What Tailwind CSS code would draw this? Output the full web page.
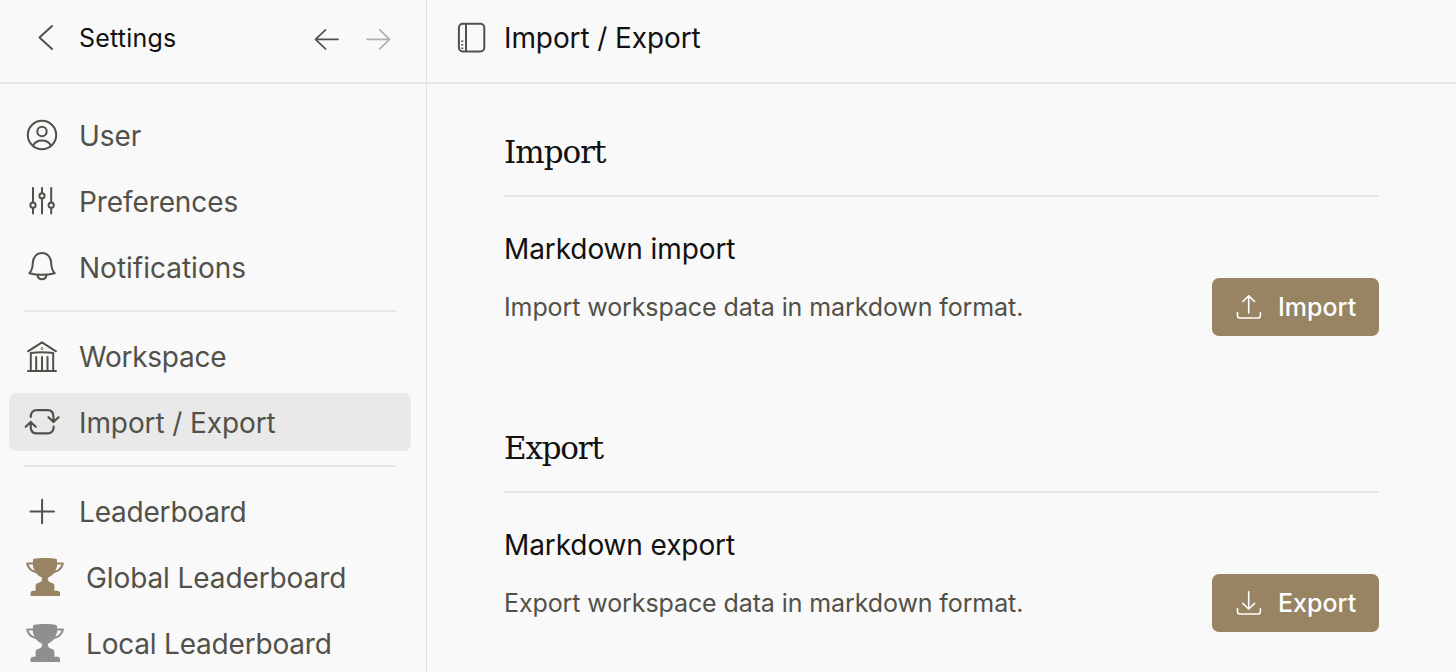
<!DOCTYPE html>
<html lang="en">
<head>
<meta charset="utf-8" />
<title>Settings – Import / Export</title>
<script src="https://cdn.jsdelivr.net/npm/@tailwindcss/browser@4"></script>
</head>
<body class="bg-[#f9f9f9] font-['Inter','Liberation_Sans',sans-serif] text-[#51514a]">
<div class="flex h-[672px] w-[1456px] overflow-hidden">

  <!-- Sidebar -->
  <aside class="flex w-[427px] shrink-0 flex-col border-r border-[#e0e0e0]">
    <header class="flex h-[84px] shrink-0 items-start border-b-2 border-[#e6e6e6] pt-[19px] pl-[26px]">
      <svg class="h-9 w-9" viewBox="0 0 36 36" fill="none" stroke="currentColor" stroke-width="2" stroke-linecap="round" stroke-linejoin="round"><path d="M26 7 13.5 18.5 26 30"/></svg>
      <h1 class="ml-[17px] w-[234px] pt-px text-[25px] leading-[36px] tracking-[0.2px] text-[#111]">Settings</h1>
      <svg class="mt-0.5 h-9 w-7" viewBox="0 0 28 36" fill="none" stroke="currentColor" stroke-width="1.7" stroke-linecap="round" stroke-linejoin="round"><path d="M25 18.3H2.500M12.500 8.800 2.500 18.300l10 9.500"/></svg>
      <svg class="mt-0.5 ml-6 h-9 w-7 text-[#b0b0a8]" viewBox="0 0 28 36" fill="none" stroke="currentColor" stroke-width="1.7" stroke-linecap="round" stroke-linejoin="round"><path d="M2 18.300h22.500M14.800 8.800l9.700 9.500-9.700 9.500"/></svg>
    </header>

    <nav class="flex flex-col pt-[22px] pr-[15px] pl-[9px] text-[28px] tracking-[-0.1px]">
      <div class="flex flex-col gap-2">
        <a class="flex h-[58px] items-center gap-[19px] pl-[15px]">
          <svg class="h-9 w-9 shrink-0" viewBox="0 0 36 36" fill="none" stroke="currentColor" stroke-width="2" stroke-linecap="round"><circle cx="18" cy="18" r="14.200"/><circle cx="18" cy="14.500" r="4.700"/><path d="M9 28.500c2-3.300 5.200-5 9-5s7 1.700 9 5"/></svg>
          <span class="pt-0.5">User</span>
        </a>
        <a class="flex h-[58px] items-center gap-[19px] pl-[15px]">
          <svg class="h-9 w-9 shrink-0" viewBox="0 0 36 36" fill="none" stroke="currentColor" stroke-width="2" stroke-linecap="round"><path d="M9 5v14.500M9 25v5.500M18 5v5M18 15.500v15M27.200 5v14.500M27.200 25v5.500"/><circle cx="9" cy="22.200" r="2.600"/><circle cx="18" cy="12.800" r="2.600"/><circle cx="27.200" cy="22.200" r="2.600"/></svg>
          <span class="pt-0.5">Preferences</span>
        </a>
        <a class="flex h-[58px] items-center gap-[19px] pl-[15px]">
          <svg class="h-9 w-9 shrink-0" viewBox="0 0 36 36" fill="none" stroke="currentColor" stroke-width="2" stroke-linecap="round" stroke-linejoin="round"><path d="M5.300 24.200c2.500-2.500 3.400-5 3.500-10.200.1-5.800 3.800-10 9.200-10s9.100 4.200 9.200 10c.1 5.200 1 7.700 3.500 10.200-8 2.100-17.400 2.100-25.400 0z"/><path d="M13.500 26c.4 2.700 2.100 4.300 4.500 4.300s4.100-1.600 4.500-4.300"/></svg>
          <span class="pt-0.5 tracking-normal">Notifications</span>
        </a>
      </div>

      <hr class="mt-[14px] mr-[15px] mb-4 ml-[15px] h-0 border-t-2 border-[#e6e6e6]" />

      <div class="flex flex-col gap-[7px]">
        <a class="flex h-[58px] items-center gap-[19px] pl-[15px]">
          <svg class="h-9 w-9 shrink-0" viewBox="0 0 36 36" fill="none" stroke="currentColor" stroke-width="2" stroke-linecap="round" stroke-linejoin="round"><path d="M4 12.300 18 3.300l14 9M6.800 32V14c7.400-1 15-1 22.400 0v18M12.200 18v13M18 18v13M23.500 18v13M4 32h28"/><circle cx="18" cy="9.600" r=".300"/></svg>
          <span class="tracking-[-0.250px]">Workspace</span>
        </a>
        <a class="flex h-[58px] items-center gap-[19px] rounded-[7px] bg-[#e9e9e9] pl-[15px]">
          <svg class="h-9 w-9 shrink-0" viewBox="0 0 36 36" fill="none" stroke="currentColor" stroke-width="2.200" stroke-linecap="round" stroke-linejoin="round"><path d="M6.700 13c0-4 2-6.800 6-6.800h11c4 0 5.800 2.800 5.800 6.800v4.800M24.500 13.200l5 4.800 5-4.800M29.700 22.500c0 4-2.200 6.900-6 6.900h-11c-4 0-6-2.900-6-6.900v-4.300M1.700 22.800l5-4.800 5 4.800"/></svg>
          <span class="pt-0.5">Import / Export</span>
        </a>
      </div>

      <hr class="mt-[14px] mr-[15px] mb-4 ml-[15px] h-0 border-t-2 border-[#e6e6e6]" />

      <div class="flex flex-col gap-2">
        <a class="flex h-[58px] items-center gap-[19px] pl-[15px]">
          <svg class="h-9 w-9 shrink-0" viewBox="0 0 36 36" fill="none" stroke="currentColor" stroke-width="2" stroke-linecap="round"><path d="M6.500 17.500h23.500M18.100 5.800v23.500"/></svg>
          <span class="tracking-[-0.200px]">Leaderboard</span>
        </a>
        <a class="flex h-[58px] items-center gap-[22px] pl-[17px]">
          <svg class="mb-0.5 h-[38px] w-[38px] shrink-0 text-[#988363]" viewBox="0 0 38 38" fill="currentColor" fill-rule="evenodd"><path d="M7 1.500C9 .2 14 0 19 0s10 .2 12 1.500l.1 3H37c.9 0 1 .8.7 1.800-1.200 4.800-4.500 7.700-9.500 8.700-1.600 1.900-3.300 3.200-5.700 4.200-.8 1-.9 1.700-.5 2.700.6 1.500 1.800 2.500 4 3 1.600.4 2.400 1.500 2.400 3.100v4.800h3c1.700 0 2.600.9 2.600 2.700v1.700c0 .6-.2.800-.8.800H5.300c-.6 0-.8-.2-.8-.8v-1.700c0-1.800.9-2.700 2.600-2.700h2.500V28c0-1.600.8-2.700 2.400-3.100 2.200-.5 3.400-1.500 4-3 .4-1 .3-1.700-.5-2.700-2.400-1-4.100-2.300-5.700-4.200C4.800 14 1.500 11.100.3 6.300 0 5.300.1 4.500 1 4.500h5.900zM2.500 6.500c1 3 3.200 5.300 6.300 6.100C7.500 10.600 7 8.800 6.800 6.500zM35.500 6.500c-1 3-3.200 5.300-6.300 6.100 1.300-2 1.800-3.800 2-6.100z"/></svg>
          <span>Global Leaderboard</span>
        </a>
        <a class="flex h-[58px] items-center gap-[22px] pl-[17px]">
          <svg class="mb-0.5 h-[38px] w-[38px] shrink-0 text-[#8f8f8f]" viewBox="0 0 38 38" fill="currentColor" fill-rule="evenodd"><path d="M7 1.500C9 .2 14 0 19 0s10 .2 12 1.500l.1 3H37c.9 0 1 .8.7 1.800-1.200 4.800-4.500 7.700-9.500 8.700-1.600 1.900-3.300 3.200-5.700 4.200-.8 1-.9 1.700-.5 2.700.6 1.500 1.800 2.500 4 3 1.600.4 2.400 1.500 2.400 3.100v4.800h3c1.700 0 2.600.9 2.600 2.700v1.700c0 .6-.2.800-.8.800H5.300c-.6 0-.8-.2-.8-.8v-1.700c0-1.800.9-2.700 2.600-2.700h2.500V28c0-1.600.8-2.700 2.400-3.100 2.200-.5 3.400-1.500 4-3 .4-1 .3-1.700-.5-2.700-2.400-1-4.100-2.300-5.700-4.200C4.800 14 1.500 11.100.3 6.300 0 5.300.1 4.500 1 4.500h5.900zM2.500 6.500c1 3 3.200 5.300 6.300 6.100C7.500 10.600 7 8.800 6.800 6.500zM35.500 6.500c-1 3-3.200 5.300-6.300 6.100 1.300-2 1.800-3.800 2-6.100z"/></svg>
          <span class="tracking-[-0.200px]">Local Leaderboard</span>
        </a>
      </div>
    </nav>
  </aside>

  <!-- Content -->
  <main class="flex grow flex-col">
    <header class="flex h-[84px] shrink-0 items-start gap-[15px] border-b-2 border-[#e6e6e6] pt-[19px] pl-[26px]">
      <svg class="h-9 w-9" viewBox="0 0 36 36" fill="none" stroke="currentColor" stroke-width="2"><rect x="5.900" y="4.800" width="25.400" height="27.600" rx="4"/><path d="M13 5v27.500"/><path d="M9.300 21.500v9" stroke-dasharray="1.500 2"/></svg>
      <h2 class="text-[28px] leading-[38px] tracking-[-0.1px] text-[#111]">Import / Export</h2>
    </header>

    <div class="flex flex-col pr-[77px] pl-[77px]">
      <section class="h-[296px] pt-[42px]">
        <h3 class="h-[71px] border-b-2 border-[#e6e6e6] pt-px font-['DejaVu_Serif',serif] text-[31px] leading-[50px] tracking-[-1px] text-[#111]">Import</h3>
        <div class="flex items-end justify-between pt-[34px]">
          <div>
            <h4 class="text-[28px] leading-[36px] tracking-[-0.1px] text-[#111]">Markdown import</h4>
            <p class="mt-[11px] text-[25px] leading-[58px] tracking-[-0.100px]">Import workspace data in markdown format.</p>
          </div>
          <button class="flex h-[58px] w-[167px] items-center gap-[14px] rounded-[7px] bg-[#988363] pl-[22px] text-[25px] font-medium text-white">
            <svg class="h-[30px] w-[30px]" viewBox="0 0 30 30" fill="none" stroke="currentColor" stroke-width="1.600" stroke-linecap="round" stroke-linejoin="round"><path d="M14.700 21V3.800M8.800 9.500l5.900-5.700 5.900 5.700M3.500 20.500v3.300c0 1.500.8 2.200 2.200 2.200h18.500c1.400 0 2.200-.7 2.200-2.200v-3.300"/></svg>
            <span class="pt-0.5">Import</span>
          </button>
        </div>
      </section>

      <section class="h-[296px] pt-[42px]">
        <h3 class="h-[71px] border-b-2 border-[#e6e6e6] pt-px font-['DejaVu_Serif',serif] text-[31px] leading-[50px] tracking-[-1.200px] text-[#111]">Export</h3>
        <div class="flex items-end justify-between pt-[34px]">
          <div>
            <h4 class="text-[28px] leading-[36px] tracking-[-0.1px] text-[#111]">Markdown export</h4>
            <p class="mt-[11px] text-[25px] leading-[58px] tracking-[-0.100px]">Export workspace data in markdown format.</p>
          </div>
          <button class="flex h-[58px] w-[167px] items-center gap-[14px] rounded-[7px] bg-[#988363] pl-[22px] text-[25px] font-medium text-white">
            <svg class="h-[30px] w-[30px]" viewBox="0 0 30 30" fill="none" stroke="currentColor" stroke-width="1.600" stroke-linecap="round" stroke-linejoin="round"><path d="M14.700 3.800V21M8.800 15.300l5.900 5.700 5.900-5.700M3.500 20.500v3.300c0 1.500.8 2.200 2.200 2.200h18.500c1.400 0 2.200-.7 2.200-2.200v-3.300"/></svg>
            <span class="pt-0.5">Export</span>
          </button>
        </div>
      </section>
    </div>
  </main>
</div>
</body>
</html>
